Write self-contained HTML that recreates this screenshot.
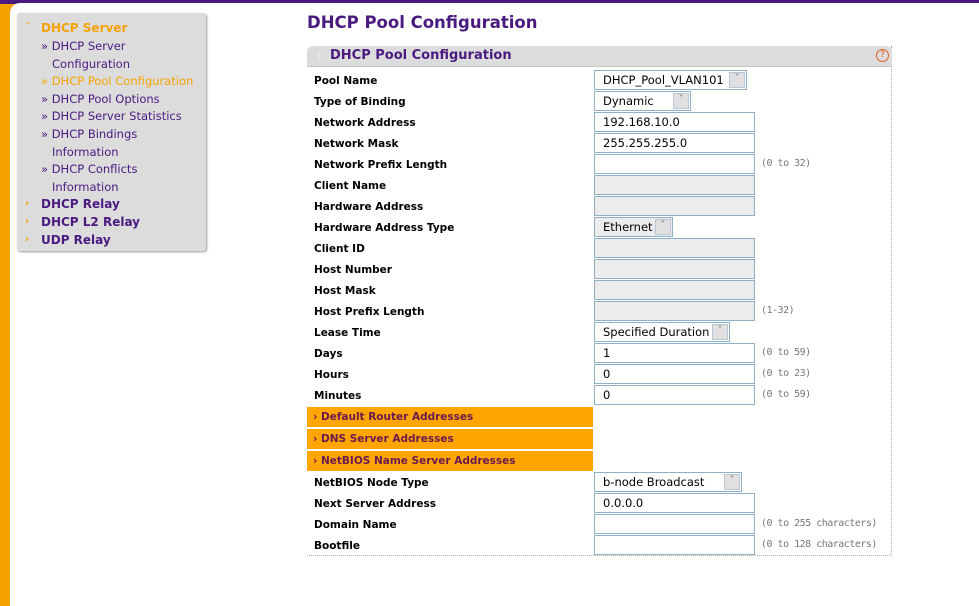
<!DOCTYPE html>
<html><head><style>
body{margin:0;width:979px;height:606px;overflow:hidden;background:#f5a300;font-family:"DejaVu Sans","Liberation Sans",sans-serif;position:relative}
#top{position:absolute;left:0;top:0;width:979px;height:4px;background:#4a1a80}
#main{position:absolute;left:10px;top:3px;width:969px;height:603px;background:#fff;border-top-left-radius:10px}
#side{position:absolute;left:17px;top:13px;width:189px;height:238px;background:#dcdcdc;border-radius:3px;box-shadow:1px 1px 2px #999}
.s{position:absolute;font-size:11.5px;color:#4a1a80;white-space:nowrap}
.sb{font-weight:bold;font-size:12px}
.o{color:#f5a300}
.m{position:absolute;left:25px;font-size:10px;color:#f5a300;font-weight:bold}
h1{position:absolute;left:307px;top:13px;margin:0;font-size:16.5px;color:#4a1a80;font-weight:bold}
#box{position:absolute;left:307px;top:46px;width:584px;height:509px;border-right:1px dotted #aaa;border-bottom:1px dotted #aaa}
#hdr{position:absolute;left:307px;top:46px;width:585px;height:20px;background:#dcdcdc;border-radius:6px 6px 0 0;border-bottom:1px solid #c8c8c8}
#hdr span{position:absolute;left:23px;top:2px;font-size:13px;font-weight:bold;color:#4a1a80}
.l{position:absolute;left:314px;font-size:10.5px;font-weight:bold;color:#000;white-space:nowrap}
.i{position:absolute;left:594px;border:1px solid #8fb1c8;background:#fff;font-size:11.5px;line-height:18px;box-sizing:border-box;padding-left:8px;width:161px;height:20px}
.d{background:#ececec}
.sel{position:absolute;left:594px;height:20px;border:1px solid #8fb1c8;box-sizing:border-box;font-size:11.5px;line-height:18px;padding-left:8px;background:#fff}
.sel b{position:absolute;right:1px;top:1px;width:16px;height:16px;background:#e0e0e0;border:1px solid #b8c8d8;box-sizing:border-box;font-weight:normal;font-size:10px;color:#777;text-align:center;line-height:12px}
.h{position:absolute;left:761px;font-family:"DejaVu Sans Mono","Liberation Mono",monospace;font-size:10px;letter-spacing:-0.5px;color:#777;white-space:nowrap}
.bar{position:absolute;left:307px;width:286px;height:21px;background:#ffa500;font-size:10.5px;font-weight:bold;color:#6a1a50;line-height:21px;padding-left:6px;box-sizing:border-box;border-bottom:1px solid #fff}
</style></head><body>
<div id="top"></div><div id="main"></div>
<div id="side"></div>
<div class="m" style="top:22px">˅</div>
<div class="s sb o" style="left:41px;top:21px">DHCP Server</div>
<div class="s" style="left:41px;top:39px">» DHCP Server</div>
<div class="s" style="left:52px;top:57px">Configuration</div>
<div class="s o" style="left:41px;top:74px">» DHCP Pool Configuration</div>
<div class="s" style="left:41px;top:92px">» DHCP Pool Options</div>
<div class="s" style="left:41px;top:109px">» DHCP Server Statistics</div>
<div class="s" style="left:41px;top:127px">» DHCP Bindings</div>
<div class="s" style="left:52px;top:145px">Information</div>
<div class="s" style="left:41px;top:162px">» DHCP Conflicts</div>
<div class="s" style="left:52px;top:180px">Information</div>
<div class="m" style="top:198px">›</div><div class="s sb" style="left:41px;top:197px">DHCP Relay</div>
<div class="m" style="top:216px">›</div><div class="s sb" style="left:41px;top:215px">DHCP L2 Relay</div>
<div class="m" style="top:234px">›</div><div class="s sb" style="left:41px;top:233px">UDP Relay</div>
<h1>DHCP Pool Configuration</h1>
<div id="box"></div>
<div id="hdr"><span>DHCP Pool Configuration</span><i style="position:absolute;left:10px;top:3px;color:#fff;font-style:normal;font-size:11px">::</i><i style="position:absolute;right:3px;top:3px;width:11px;height:11px;border:1px solid #e06020;border-radius:50%;font-size:9px;color:#e06020;text-align:center;line-height:11px;font-style:normal">?</i></div>

<div class="l" style="top:75px">Pool Name</div><div class="sel" style="top:70px;width:153px">DHCP_Pool_VLAN101<b>˅</b></div>
<div class="l" style="top:96px">Type of Binding</div><div class="sel" style="top:91px;width:97px">Dynamic<b>˅</b></div>
<div class="l" style="top:117px">Network Address</div><div class="i" style="top:112px">192.168.10.0</div>
<div class="l" style="top:138px">Network Mask</div><div class="i" style="top:133px">255.255.255.0</div>
<div class="l" style="top:159px">Network Prefix Length</div><div class="i" style="top:154px"></div><div class="h" style="top:158px">(0 to 32)</div>
<div class="l" style="top:180px">Client Name</div><div class="i d" style="top:175px"></div>
<div class="l" style="top:201px">Hardware Address</div><div class="i d" style="top:196px"></div>
<div class="l" style="top:222px">Hardware Address Type</div><div class="sel" style="top:217px;width:79px;background:#ececec">Ethernet<b>˅</b></div>
<div class="l" style="top:243px">Client ID</div><div class="i d" style="top:238px"></div>
<div class="l" style="top:264px">Host Number</div><div class="i d" style="top:259px"></div>
<div class="l" style="top:285px">Host Mask</div><div class="i d" style="top:280px"></div>
<div class="l" style="top:306px">Host Prefix Length</div><div class="i d" style="top:301px"></div><div class="h" style="top:305px">(1-32)</div>
<div class="l" style="top:327px">Lease Time</div><div class="sel" style="top:322px;width:136px">Specified Duration<b>˅</b></div>
<div class="l" style="top:348px">Days</div><div class="i" style="top:343px">1</div><div class="h" style="top:347px">(0 to 59)</div>
<div class="l" style="top:369px">Hours</div><div class="i" style="top:364px">0</div><div class="h" style="top:368px">(0 to 23)</div>
<div class="l" style="top:390px">Minutes</div><div class="i" style="top:385px">0</div><div class="h" style="top:389px">(0 to 59)</div>
<div class="bar" style="top:407px">› Default Router Addresses</div>
<div class="bar" style="top:429px">› DNS Server Addresses</div>
<div class="bar" style="top:451px">› NetBIOS Name Server Addresses</div>
<div class="l" style="top:477px">NetBIOS Node Type</div><div class="sel" style="top:472px;width:148px">b-node Broadcast<b>˅</b></div>
<div class="l" style="top:498px">Next Server Address</div><div class="i" style="top:493px">0.0.0.0</div>
<div class="l" style="top:519px">Domain Name</div><div class="i" style="top:514px"></div><div class="h" style="top:518px">(0 to 255 characters)</div>
<div class="l" style="top:540px">Bootfile</div><div class="i" style="top:535px"></div><div class="h" style="top:539px">(0 to 128 characters)</div>
</body></html>
